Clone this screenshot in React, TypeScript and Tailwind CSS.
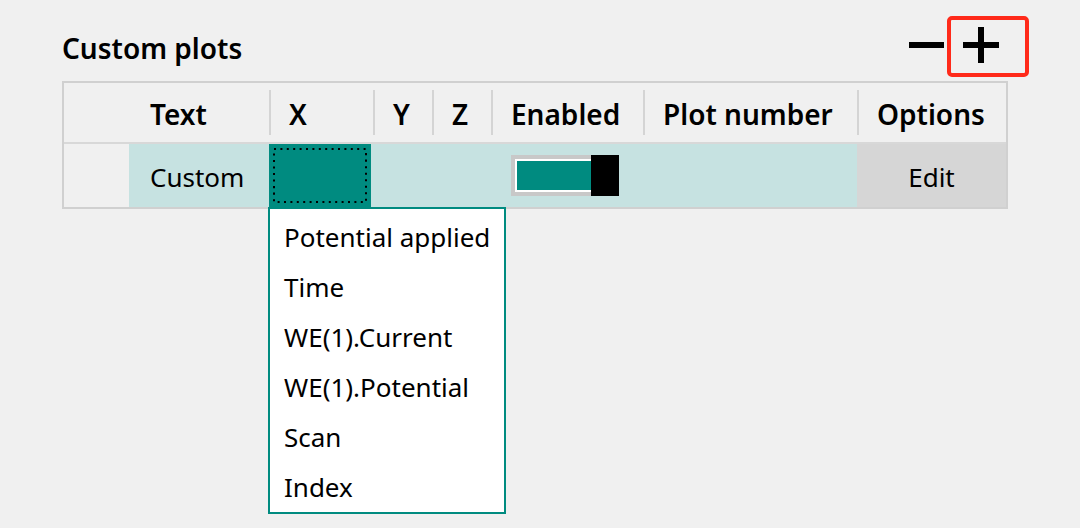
import React from 'react';

const FONT = { fontFamily: '"Noto Sans", "Open Sans", sans-serif' };

const COLUMNS = ['', 'Text', 'X', 'Y', 'Z', 'Enabled', 'Plot number', 'Options'];

const X_OPTIONS = ['Potential applied', 'Time', 'WE(1).Current', 'WE(1).Potential', 'Scan', 'Index'];

const GRID = 'grid grid-cols-[65px_140px_104px_59px_59px_152px_214px_149px]';

function Toggle() {
  return (
    <div className="flex h-[41px] w-[108px] items-stretch">
      <div className="flex flex-1 bg-[#c8c8c8] p-[4px] pr-0">
        <div className="flex flex-1 bg-white p-[2px] pr-0">
          <div className="flex-1 bg-[#008b80]" />
        </div>
      </div>
      <div className="w-[28px] bg-black" />
    </div>
  );
}

export default function App() {
  return (
    <div className="h-[528px] w-full bg-[#f0f0f0] pl-[62px] text-black" style={FONT}>
      {/* Title row */}
      <div className="flex h-[81px] w-[945px] items-center justify-between pt-[14px]">
        <h1 className="text-[28px] font-semibold">Custom plots</h1>
        <div className="relative flex items-center gap-[19px] pr-[8px] pb-[6px]">
          <div className="h-[6px] w-[35px] bg-black" />
          <div className="relative h-[36px] w-[36px]">
            <div className="absolute left-0 top-[15px] h-[6px] w-[36px] bg-black" />
            <div className="absolute left-[15px] top-0 h-[36px] w-[6px] bg-black" />
            <div className="absolute -left-[16px] -top-[11px] h-[61px] w-[82px] rounded-[5px] border-[4px] border-[#ff2a1a]" />
          </div>
        </div>
      </div>

      {/* Table */}
      <div className="w-[946px] border-2 border-[#d0d0d0]">
        <div className={`${GRID} h-[61px] border-b-2 border-[#d8d8d8]`}>
          {COLUMNS.map((col, i) => (
            <div key={i} className="flex items-center">
              {i > 1 && <div className="h-[45px] w-[2px] bg-[#d4d4d4]" />}
              <span className={`pt-[3px] text-[28px] font-semibold ${i > 1 ? 'pl-[18px]' : 'pl-[21px]'}`}>{col}</span>
            </div>
          ))}
        </div>
        <div className={`${GRID} h-[63px]`}>
          <div className="bg-[#f0f0f0]" />
          <div className="flex items-center bg-[#c6e2e1] pl-[21px] pt-[3px] text-[26px]">Custom</div>
          <div className="relative bg-[#c6e2e1]">
            <div className="h-full w-[102px] bg-[#008b80] p-[4px]">
              <svg className="h-full w-full" viewBox="0 0 94 54" preserveAspectRatio="none">
                <rect x="1" y="1" width="92" height="52" fill="none" stroke="black" strokeWidth="2" strokeDasharray="2 4.4" />
              </svg>
            </div>
            {/* Dropdown */}
            <div className="absolute left-[-1px] top-full z-10 w-[238px] border-2 border-[#008b80] bg-white pt-[3px]">
              {X_OPTIONS.map(opt => (
                <div key={opt} className="flex h-[50px] items-center pl-[14px] text-[26px]">
                  {opt}
                </div>
              ))}
            </div>
          </div>
          <div className="bg-[#c6e2e1]" />
          <div className="bg-[#c6e2e1]" />
          <div className="flex items-center bg-[#c6e2e1] pl-[20px]">
            <Toggle />
          </div>
          <div className="bg-[#c6e2e1]" />
          <div className="flex items-center justify-center bg-[#d6d6d6] pt-[3px] text-[26px]">Edit</div>
        </div>
      </div>
    </div>
  );
}
